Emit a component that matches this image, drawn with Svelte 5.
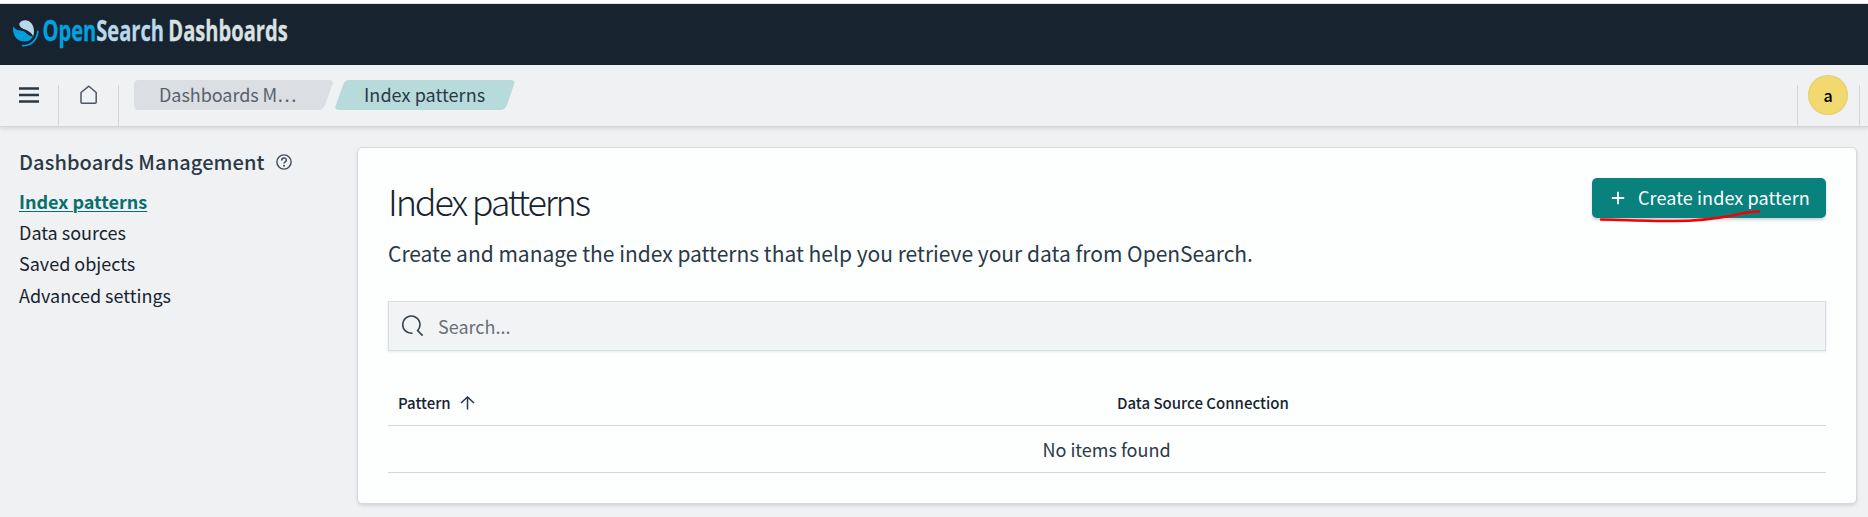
<script>
  const links = ['Index patterns', 'Data sources', 'Saved objects', 'Advanced settings'];
  let active = $state('Index patterns');
</script>

<div class="page">
  <header class="brand">
    <svg width="600" height="61" viewBox="0 4 600 61" role="img" aria-label="OpenSearch Dashboards">
      <path d="M13.200 26.300C12.200 33.500 15.500 41.500 24 41.500 28.500 41.500 31.500 39.500 33.200 36.400 29.500 36.600 27.500 34.300 25.200 32.200 21.500 29.500 16.500 32 13.200 26.300z" fill="#009edc" />
      <path d="M19.300 23.500C22 19 28.500 19.300 31.600 23.600 34.400 27.500 34.400 32.500 33.200 36.200 31.800 33.500 30.500 32.300 27.800 30.700 24.300 28.800 19.300 28.800 19.300 23.500z" fill="#b9d9eb" />
      <path d="M37.800 31.500c-.5 7.800-6.400 14.300-15.100 14.200" fill="none" stroke="#009edc" stroke-width="1.800" stroke-linecap="round" />
      <g transform="translate(42.500 41.300) scale(.718 1)">
        <text class="wordmark"><tspan class="open">Open</tspan><tspan class="search">Search</tspan><tspan class="dash" dx="6">Dashboards</tspan></text>
      </g>
    </svg>
  </header>

  <nav class="bar">
    <button class="menu" aria-label="Menu">
      <svg width="20" height="18" viewBox="0 0 20 18"><path d="M0 2.500h20M0 9h20M0 15.500h20" stroke="#2a3947" stroke-width="2.400" /></svg>
    </button>
    <button class="home" aria-label="Home">
      <svg width="18" height="20" viewBox="0 0 18 20"><path d="M1 7.500 8.900 1.200 16.200 7.500V17.200a1 1 0 0 1-1 1H2a1 1 0 0 1-1-1z" fill="none" stroke="#4a5865" stroke-width="1.500" stroke-linejoin="round" /></svg>
    </button>
    <div class="crumbs">
      <div class="crumb first">
        <svg width="199" height="30"><path d="M5 0H195Q200 0 198.500 4.500L191 25Q189 30 184 30H5Q0 30 0 25V5Q0 0 5 0z" fill="#dbdee3" /></svg>
        <span>Dashboards M…</span>
      </div>
      <div class="crumb last">
        <svg width="180" height="30"><path d="M14 0H176Q180.500 0 179 4.500L172 25Q170 30 165 30H4Q-.500 30 .500 26L8 5Q10 0 14 0z" fill="#b7dbda" /></svg>
        <span>Index patterns</span>
      </div>
    </div>
    <div class="user"><span class="avatar">a</span></div>
  </nav>

  <div class="body">
    <aside>
      <h2>Dashboards Management
        <svg width="16" height="16" viewBox="0 0 16 16"><circle cx="8" cy="8" r="7.100" fill="none" stroke="#3e4c59" stroke-width="1.400" /><path d="M5.700 6.400C5.700 3.200 10.400 3.400 10.400 6c0 1.900-2.400 1.700-2.400 3.600" fill="none" stroke="#3e4c59" stroke-width="1.500" /><circle cx="8" cy="11.700" r="1" fill="#3e4c59" /></svg>
      </h2>
      <ul>
        {#each links as link}
          <li><button class:active={link === active} onclick={() => (active = link)}>{link}</button></li>
        {/each}
      </ul>
    </aside>

    <main>
      <div class="top">
        <h1>Index patterns</h1>
        <div class="action">
          <button class="create">
            <svg width="14" height="14" viewBox="0 0 14 14"><path d="M7 .8v12.400M.800 7h12.400" stroke="#fff" stroke-width="1.800" /></svg>
            <span>Create index pattern</span>
          </button>
          <svg class="mark" width="164" height="16" viewBox="0 0 164 16"><path d="M2 10.500C28 11 52 12 76 12 96 12 120 9 134 6.500 144 4 150 2.500 160 2.500" fill="none" stroke="#f40000" stroke-width="2.500" stroke-linecap="round" /></svg>
        </div>
      </div>
      <p>Create and manage the index patterns that help you retrieve your data from OpenSearch.</p>
      <label class="search">
        <svg width="22" height="22" viewBox="0 0 22 22"><path d="M10.500 18.200A8.600 8.600 0 1 1 15.600 15.600L20.600 20.600" fill="none" stroke="#35424f" stroke-width="1.600" /></svg>
        <input placeholder="Search..." />
      </label>
      <div class="row head">
        <span>Pattern
          <svg width="15" height="14" viewBox="0 0 15 14"><path d="M7.500 13.500V1.200M1 7 7.500 1 14 7" fill="none" stroke="#2a3947" stroke-width="1.500" /></svg>
        </span>
        <span>Data Source Connection</span>
      </div>
      <div class="row empty">No items found</div>
    </main>
  </div>
</div>

<style>
  :global(body) { background: #f0f1f3; }
  .page {
    height: 517px;
    overflow: hidden;
    box-sizing: border-box;
    font-family: 'Noto Sans CJK JP', 'Noto Sans', sans-serif;
    font-size: 18px;
    color: #172430;
    display: flex;
    flex-direction: column;
  }
  button { font: inherit; color: inherit; border: 0; background: none; padding: 0; text-align: left; }
  svg { display: block; flex: none; }
  .brand { background: #172430; border-top: 1px solid #dfe1e3; box-shadow: 0 -3px #fdfefe; margin-top: 3px; height: 61px; flex: none; }
  .wordmark { font: 700 28px 'Open Sans', sans-serif; stroke-width: .3px; }
  .open { fill: #00a3e0; stroke: #00a3e0; }
  tspan.search { fill: #b9d9eb; stroke: #b9d9eb; }
  .dash { fill: #d9e1e2; stroke: #d9e1e2; }
  .bar {
    height: 61px;
    flex: none;
    display: flex;
    border-bottom: 1px solid #d3d7dc;
    box-shadow: 0 2px 3px rgba(70, 80, 95, .14);
    background: #f0f1f3;
    z-index: 1;
  }
  .menu, .home, .user { margin-top: 20px; box-sizing: border-box; border-right: 1px solid #d3d7dc; display: flex; align-items: flex-start; }
  .menu { width: 59px; padding: 1px 0 0 19px; }
  .home { width: 60px; padding: 0 0 0 20.500px; }
  .crumbs { display: flex; gap: 2px; padding: 15px 0 0 15px; flex: 1; }
  .crumb { display: grid; height: 30px; line-height: 29px; }
  .crumb > * { grid-area: 1 / 1; }
  .first span { padding-left: 25px; color: #59616c; letter-spacing: -.05px; }
  .last span { padding-left: 29px; color: #2a3947; letter-spacing: .07px; }
  .user { border-left: 1px solid #d3d7dc; width: 63px; margin-right: 8px; padding-left: 10px; }
  .avatar {
    width: 40px; height: 40px; border-radius: 50%; margin-top: -10px;
    background: #f1d86f; color: #000; text-align: center; line-height: 40px; font-size: 16px; font-weight: 500;
    box-shadow: inset 0 0 0 1px rgba(120, 120, 120, .1);
  }
  .body { display: flex; flex: 1; }
  aside { width: 357px; flex: none; box-sizing: border-box; padding: 20px 0 0 19px; }
  h2 { margin: 0; font-size: 20px; line-height: 30px; font-weight: 500; letter-spacing: .1px; color: #2a3947; display: flex; align-items: center; gap: 11px; }
  ul { list-style: none; margin: 8.500px 0 0; padding: 0; }
  li { height: 31.400px; line-height: 31.400px; }
  li button { display: block; }
  .active { color: #07706d; font-weight: 700; text-decoration: underline; text-decoration-thickness: 1px; text-underline-offset: 2px; }
  main {
    width: 1500px; height: 357px; box-sizing: border-box; margin-top: 20px; padding: 30px 30px 0;
    background: #fdfefe; border: 1px solid #d3d9dd; border-radius: 5px;
    box-shadow: 0 2px 3px rgba(90, 100, 115, .18);
  }
  .top { display: flex; justify-content: space-between; height: 44px; }
  h1 { margin: 0; font-size: 36px; font-weight: 300; line-height: 44px; letter-spacing: -2.150px; }
  .action { position: relative; }
  .create {
    display: flex; align-items: center; gap: 13px; width: 234px; height: 40px; padding-left: 19px; box-sizing: border-box;
    background: #09827e; color: #fff; border-radius: 5px; box-shadow: 0 2px 3px rgba(60, 80, 90, .25); line-height: 38px; letter-spacing: .1px;
  }
  .create span { margin-top: -2px; }
  .mark { position: absolute; left: 7px; top: 31px; }
  p { margin: 15px 0 32px; font-size: 21px; line-height: 32px; color: #2a3947; }
  label.search {
    display: flex; align-items: center; gap: 14px; height: 50px; box-sizing: border-box; padding-left: 13px;
    background: #f2f3f5; border: 1px solid #d5dfe1; box-shadow: 0 1px 2px rgba(90, 120, 130, .15);
  }
  input { border: 0; background: none; padding: 0; font: inherit; flex: 1; outline: 0; }
  input::placeholder { color: #69707a; opacity: 1; }
  .row { display: flex; align-items: center; border-bottom: 1px solid #d3d6db; }
  .head { margin-top: 29px; height: 45px; font-size: 15px; font-weight: 500; }
  .head span { flex: 1; display: flex; align-items: center; gap: 9px; padding-left: 10px; }
  .empty { height: 46px; justify-content: center; padding-right: 1px; line-height: 44px; padding-bottom: 1px; box-sizing: content-box; height: 45px; color: #2a3947; }
</style>
